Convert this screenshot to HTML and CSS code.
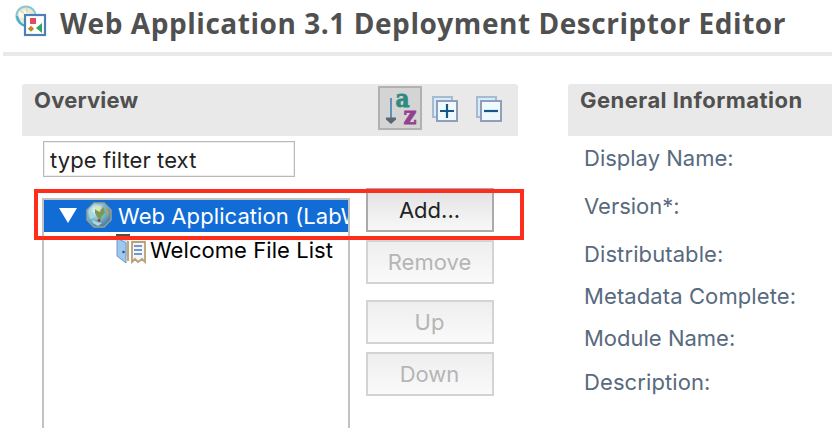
FILE: index.html
```html
<!DOCTYPE html>
<html lang="en">
<head>
<meta charset="utf-8">
<title>Web Application 3.1 Deployment Descriptor Editor</title>
<link rel="stylesheet" href="styles.css">
</head>
<body>
<header class="title-bar">
  <svg class="app-icon" viewBox="0 0 34 34" width="34" height="34">
    <circle cx="11" cy="11" r="9.6" fill="#e4ecd9" stroke="#8cc4d4" stroke-width="2"/>
    <path d="M4 6h8l3 4-4 4-7-2z" fill="#fffbed"/>
    <path d="M5 6l4 2M12 3v5" stroke="#e2d6b4" stroke-width="1.6"/>
    <path d="M2 11q2 8 8 10" fill="none" stroke="#49a9c7" stroke-width="2"/>
    <rect x="10" y="10" width="20" height="20" fill="#fff" stroke="#4b80b8" stroke-width="2.2"/>
    <rect x="15" y="13" width="6" height="6" fill="#e34a62"/>
    <path d="M27 18v10l-6-5z" fill="#36a45c"/>
    <path d="M16 20.8l3.2 3-3.2 3-3.2-3z" fill="#b98d25"/>
  </svg>
  <h1>Web Application 3.1 Deployment Descriptor Editor</h1>
</header>
<main class="columns">
  <section class="overview">
    <div class="section-head">
      <h2 class="tight">Overview</h2>
      <div class="tools">
        <span class="tool pressed">
          <svg viewBox="0 0 40 40" width="40" height="40">
            <path d="M11 10v20" stroke="#5a94bd" stroke-width="2"/>
            <path d="M6 29.5h10v2l-5 4.5-5-4.5z" fill="#5b6670"/>
            <text class="glyph a" x="15.5" y="18.5" textLength="14" lengthAdjust="spacingAndGlyphs">a</text>
            <text class="glyph z" x="23.5" y="35.5" textLength="13" lengthAdjust="spacingAndGlyphs">z</text>
          </svg>
        </span>
        <svg class="tool" viewBox="0 0 28 28" width="28" height="28">
          <rect x="2" y="2" width="19" height="20" fill="#d3eefb" stroke="#a9b9d1" stroke-width="2"/>
          <rect x="6" y="6" width="20" height="20" fill="#effaff" stroke="#929db9" stroke-width="2"/>
          <path d="M9 16h14M16 9v14" stroke="#175788" stroke-width="2.2"/>
        </svg>
        <svg class="tool" viewBox="0 0 28 28" width="28" height="28">
          <rect x="2" y="2" width="19" height="20" fill="#d3eefb" stroke="#a9b9d1" stroke-width="2"/>
          <rect x="6" y="6" width="20" height="20" fill="#effaff" stroke="#929db9" stroke-width="2"/>
          <path d="M9 16h14" stroke="#175788" stroke-width="2.2"/>
        </svg>
      </div>
    </div>
    <input class="filter" type="text" value="type filter text" aria-label="Filter">
    <div class="body">
      <div class="tree">
        <div class="row selected">
          <svg class="twisty" viewBox="0 0 18 15" width="18" height="15"><path d="M0 0h18L9 15z" fill="#fff"/></svg>
          <svg class="globe" viewBox="0 0 26 26" width="26" height="26">
            <defs><radialGradient id="sea" cx=".35" cy=".3" r=".75"><stop offset="0" stop-color="#eafaf4"/><stop offset=".5" stop-color="#82bdd4"/><stop offset="1" stop-color="#477799"/></radialGradient></defs>
            <path d="M8 1h10l7 7v10l-7 7H8l-7-7V8z" fill="url(#sea)" stroke="#9aa294" stroke-width="1.4"/>
            <path d="M9 7l4 2 5-4 1 6-3 3-2 4-3-3-2-4z" fill="#7a9a58"/>
            <path d="M10 4h5l-1 6-4-2z" fill="#dfe4b6"/>
            <path d="M20 5l3 5-1 5-2-3z" fill="#a3a469"/>
            <path d="M3 10l4 0 1 5-4 2z" fill="#a8dbe0"/>
            <path d="M6 18l5 2 5 1-4 3-5-3z" fill="#a4dcdc"/>
            <circle cx="13" cy="18.5" r="1.4" fill="#a7373c"/>
          </svg>
          <span class="label">Web Application (LabWeb)</span>
        </div>
        <div class="row child">
          <svg class="files" viewBox="0 0 30 30" width="30" height="30">
            <path d="M0 0h14v3H0z" fill="#5b4b40"/>
            <path d="M1 3h11v19H1z" fill="#c9ddf0"/>
            <path d="M1 4l9 5v20L1 22z" fill="#9cc8f1" stroke="#7098c5"/>
            <circle cx="7.5" cy="18" r="1.2" fill="#234b7c"/>
            <path d="M12 7v20" stroke="#c6a773" stroke-width="2"/>
            <path d="M16 8h13v20l-3-3-4 3-3-3-3 3z" fill="#f2f5fb" stroke="#bba172" stroke-width="1.8"/>
            <path d="M18 12h8M18 16h8M18 20h8" stroke="#7597cb" stroke-width="2"/>
          </svg>
          <span class="label">Welcome File List</span>
        </div>
      </div>
      <div class="buttons">
        <button class="add">Add...</button>
        <button disabled>Remove</button>
        <button class="up" disabled>Up</button>
        <button disabled>Down</button>
      </div>
      <div class="highlight"></div>
    </div>
  </section>
  <section class="general">
    <div class="section-head"><h2>General Information</h2></div>
    <ul class="fields">
      <li class="tall">Display Name:</li>
      <li class="tall">Version*:</li>
      <li class="wide">Distributable:</li>
      <li class="wide">Metadata Complete:</li>
      <li class="last">Module Name:</li>
      <li class="wide">Description:</li>
    </ul>
  </section>
</main>
</body>
</html>
```
FILE: styles.css
```css
* { box-sizing: border-box; }
body {
  margin: 0;
  width: 832px;
  height: 428px;
  overflow: hidden;
  background: #fff;
  font-family: Inter, "Liberation Sans", sans-serif;
  font-size: 22px;
}
h1, h2, ul { margin: 0; padding: 0; }
.title-bar {
  display: flex;
  height: 56px;
  margin-left: 3px;
  padding: 4px 0 0 11px;
  border-bottom: 4px solid #e9e9e9;
}
.app-icon { flex: none; margin: 1px 0 0 1px; }
h1 {
  margin-left: 11px;
  font: 700 28px/38px "Open Sans", sans-serif;
  letter-spacing: .55px;
  color: #505050;
  white-space: nowrap;
}
.columns { display: flex; gap: 50px; padding: 28px 0 0 22px; }
.overview { flex: none; width: 496px; }
.general { flex: 1; }
.section-head {
  display: flex;
  justify-content: space-between;
  height: 52px;
  padding-left: 12px;
  background: #e9e9e9;
  border-radius: 3px 3px 0 0;
}
.general .section-head { border-top-right-radius: 0; }
h2 { font-size: 22px; line-height: 32px; font-weight: 700; letter-spacing: .46px; color: #505050; }
h2.tight { letter-spacing: .2px; }
.tools { display: flex; padding: 2px 15px 0 0; }
.tool { margin: 9px 0 0 16px; }
.tool.pressed { width: 44px; height: 44px; margin: 0 -1px 0 0; border: 2px solid #b1b1b1; background: #d4d4d4; }
.tool.pressed + .tool { margin-left: 10px; }
.glyph { font: 700 25px "DejaVu Serif", serif; stroke-width: .9px; }
.glyph.a { fill: #2e8b80; stroke: #2e8b80; }
.glyph.z { fill: #92408f; stroke: #92408f; }
.filter {
  display: block;
  width: 252px;
  height: 36px;
  margin: 5px 0 0 21px;
  padding: 2px 6px 0;
  border: 1px solid #b9b9b9;
  box-shadow: inset 0 0 0 1px #ededed;
  outline: 0;
  color: #222;
  font: inherit;
  letter-spacing: .1px;
}
.body { position: relative; display: flex; gap: 16px; margin: 11px 0 0 20px; }
.tree {
  width: 308px;
  height: 240px;
  margin-top: 10px;
  border: 2px solid #c2c2c2;
  overflow: hidden;
}
.row { display: flex; white-space: nowrap; line-height: 32px; }
.row.selected { height: 32px; padding-left: 15px; background: #116cd6; color: #fff; }
.row.selected .label { letter-spacing: .08px; }
.twisty { flex: none; margin-top: 8px; }
.globe { flex: none; margin: 2px 6px 0 9px; }
.row.child { padding: 2px 0 0 72px; color: #000; letter-spacing: .06px; }
.files { flex: none; margin-right: 4px; }
.buttons { display: flex; flex-direction: column; gap: 8px; width: 128px; }
button {
  height: 44px;
  padding: 0 1px 0 0;
  border: 2px solid #d3d3d3;
  background: linear-gradient(#eee, #fafafa);
  color: #b5b5b5;
  font: inherit;
}
button.add { border-color: #aaa; background: linear-gradient(#e2e2e2, #f8f8f8); color: #222; }
button.up { margin-top: 8px; }
.highlight { position: absolute; left: -8px; top: 1px; width: 490px; height: 51px; border: 4px solid #ff2d1c; }
.fields { list-style: none; padding: 6px 0 0 16px; color: #586a7e; white-space: nowrap; }
.fields li { height: 42px; line-height: 32px; }
.fields .tall { height: 48px; }
.fields .last { height: 44px; }
.fields .wide { letter-spacing: .1px; }
```
